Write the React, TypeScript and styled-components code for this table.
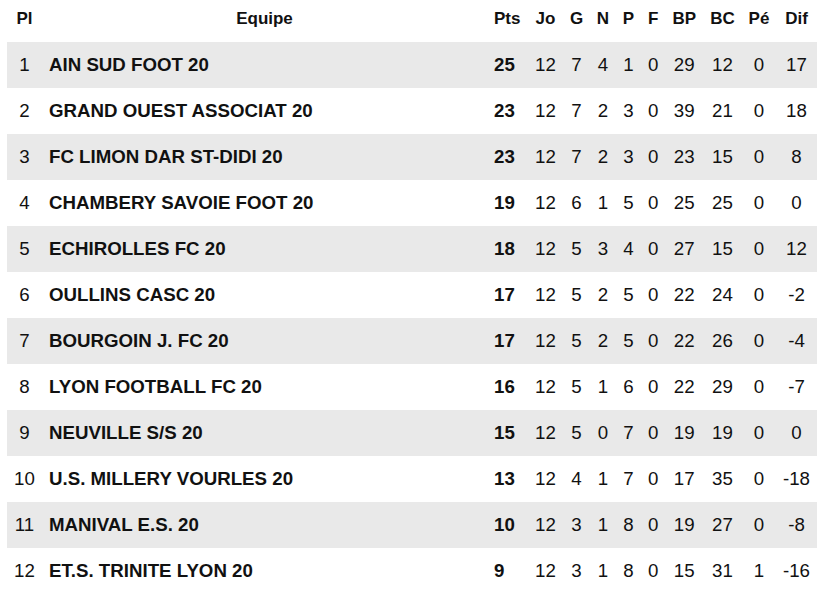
import React from "react";
import styled, { createGlobalStyle } from "styled-components";

const GlobalStyle = createGlobalStyle`
  html, body {
    margin: 0;
    padding: 0;
    background: #ffffff;
  }
  body {
    font-family: "Liberation Sans", Arial, sans-serif;
    color: #111111;
  }
`;

const COLS = "35px 445px 41px 35px 27px 26px 25px 24.5px 37.5px 39px 34px 41px";

const Table = styled.div`
  margin-left: 7px;
  width: 810px;
  display: flex;
  flex-direction: column;
`;

const HeaderRow = styled.div`
  display: grid;
  grid-template-columns: ${COLS};
  height: 42px;
  padding-bottom: 4px;
  box-sizing: border-box;
  align-items: center;
  font-size: 17px;
  font-weight: 700;
`;

const Row = styled.div<{ $shaded: boolean }>`
  display: grid;
  grid-template-columns: ${COLS};
  height: 46px;
  align-items: center;
  font-size: 18.7px;
  background: ${(p) => (p.$shaded ? "#e9e9e9" : "#ffffff")};
`;

const Cell = styled.div<{ $align?: "left" | "center"; $bold?: boolean; $pad?: number }>`
  text-align: ${(p) => p.$align ?? "center"};
  padding-left: ${(p) => p.$pad ?? 0}px;
  font-weight: ${(p) => (p.$bold ? 700 : "inherit")};
  white-space: nowrap;
  line-height: 1.15;
`;

type Team = [number, string, number, number, number, number, number, number, number, number, number, number];

const teams: Team[] = [
  [1, "AIN SUD FOOT 20", 25, 12, 7, 4, 1, 0, 29, 12, 0, 17],
  [2, "GRAND OUEST ASSOCIAT 20", 23, 12, 7, 2, 3, 0, 39, 21, 0, 18],
  [3, "FC LIMON DAR ST-DIDI 20", 23, 12, 7, 2, 3, 0, 23, 15, 0, 8],
  [4, "CHAMBERY SAVOIE FOOT 20", 19, 12, 6, 1, 5, 0, 25, 25, 0, 0],
  [5, "ECHIROLLES FC 20", 18, 12, 5, 3, 4, 0, 27, 15, 0, 12],
  [6, "OULLINS CASC 20", 17, 12, 5, 2, 5, 0, 22, 24, 0, -2],
  [7, "BOURGOIN J. FC 20", 17, 12, 5, 2, 5, 0, 22, 26, 0, -4],
  [8, "LYON FOOTBALL FC 20", 16, 12, 5, 1, 6, 0, 22, 29, 0, -7],
  [9, "NEUVILLE S/S 20", 15, 12, 5, 0, 7, 0, 19, 19, 0, 0],
  [10, "U.S. MILLERY VOURLES 20", 13, 12, 4, 1, 7, 0, 17, 35, 0, -18],
  [11, "MANIVAL E.S. 20", 10, 12, 3, 1, 8, 0, 19, 27, 0, -8],
  [12, "ET.S. TRINITE LYON 20", 9, 12, 3, 1, 8, 0, 15, 31, 1, -16],
];

const headers = ["Jo", "G", "N", "P", "F", "BP", "BC", "Pé", "Dif"];

export default function App() {
  return (
    <>
      <GlobalStyle />
      <Table>
        <HeaderRow>
          <Cell>Pl</Cell>
          <Cell>Equipe</Cell>
          <Cell $align="left" $pad={7}>Pts</Cell>
          {headers.map((h) => (
            <Cell key={h}>{h}</Cell>
          ))}
        </HeaderRow>
        {teams.map((t, i) => {
          const [pl, name, pts, ...rest] = t;
          return (
            <Row key={pl} $shaded={i % 2 === 0}>
              <Cell>{pl}</Cell>
              <Cell $align="left" $pad={7} $bold>{name}</Cell>
              <Cell $align="left" $pad={7} $bold>{pts}</Cell>
              {rest.map((v, j) => (
                <Cell key={j}>{v}</Cell>
              ))}
            </Row>
          );
        })}
      </Table>
    </>
  );
}
